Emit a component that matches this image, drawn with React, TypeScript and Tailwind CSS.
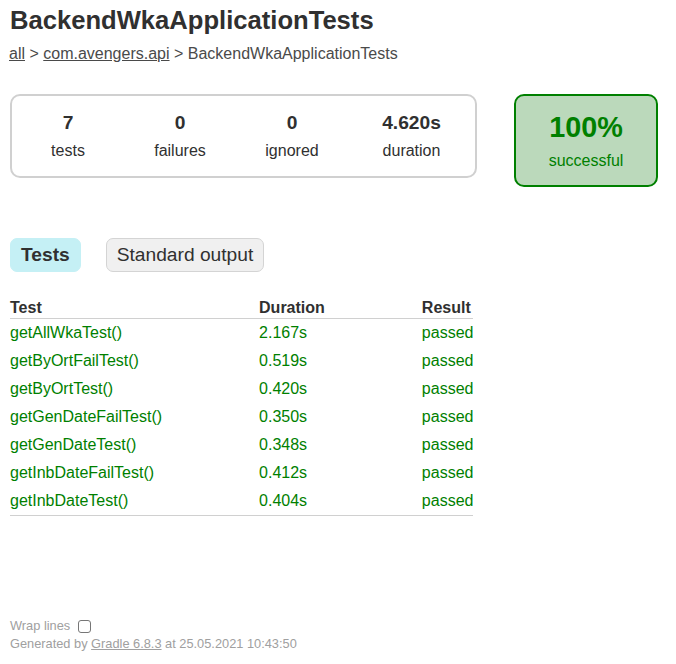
import React from "react";

const tests = [
  { name: "getAllWkaTest()", duration: "2.167s" },
  { name: "getByOrtFailTest()", duration: "0.519s" },
  { name: "getByOrtTest()", duration: "0.420s" },
  { name: "getGenDateFailTest()", duration: "0.350s" },
  { name: "getGenDateTest()", duration: "0.348s" },
  { name: "getInbDateFailTest()", duration: "0.412s" },
  { name: "getInbDateTest()", duration: "0.404s" },
];

function Counter({ value, label, wide }: { value: string; label: string; wide?: boolean }) {
  return (
    <div className={`${wide ? "w-[127px]" : "w-[112px]"} py-[16px] text-center`}>
      <p className="text-[19.2px] font-bold leading-[22px] mb-[8px]">{value}</p>
      <p className="leading-[18px]">{label}</p>
    </div>
  );
}

export default function App() {
  return (
    <div className="min-h-[664px] bg-white text-[#303030] text-[16px] font-['Liberation_Sans',Arial,sans-serif] px-[10px] pt-[6px]">
      <h1 className="text-[25.6px] font-bold leading-[29px] mb-[10px] whitespace-nowrap">BackendWkaApplicationTests</h1>
      <div className="leading-[18px] ml-[-1px] text-[#4a4a4a]">
        <a className="underline" href="#">all</a> &gt; <a className="underline" href="#">com.avengers.api</a> &gt; BackendWkaApplicationTests
      </div>

      {/* summary */}
      <div className="flex items-start mt-[31px]">
        <div className="flex border-2 border-[#d0d0d0] rounded-[10px]">
          <Counter value="7" label="tests" />
          <Counter value="0" label="failures" />
          <Counter value="0" label="ignored" />
          <Counter value="4.620s" label="duration" wide />
        </div>
        <div className="ml-[37px] w-[144px] border-2 border-[#008000] bg-[#bbd9bb] rounded-[10px] py-[15px] text-center text-[#008000]">
          <p className="text-[28.8px] font-bold leading-[33px] mb-[8px]">100%</p>
          <p className="leading-[18px]">successful</p>
        </div>
      </div>

      {/* tabs */}
      <div className="flex mt-[51px]">
        <div className="px-[10px] py-[5px] rounded-[7px] border border-[#c5f0f5] bg-[#c5f0f5] mr-[25px]">
          <span className="text-[19.2px] font-bold leading-[22px] block">Tests</span>
        </div>
        <div className="px-[10px] py-[5px] rounded-[7px] border border-[#d4d4d4] bg-[#f0f0f0]">
          <span className="text-[19.2px] leading-[22px] block">Standard output</span>
        </div>
      </div>

      {/* table */}
      <table className="mt-[27px] border-collapse border-b border-[#d0d0d0]">
        <thead>
          <tr className="border-b border-[#d0d0d0]">
            <th className="text-left font-bold leading-[18px] p-0 pb-[1px] whitespace-nowrap">Test</th>
            <th className="text-left font-bold leading-[18px] pl-[97px] pb-[1px] whitespace-nowrap">Duration</th>
            <th className="text-left font-bold leading-[18px] pl-[97px] pb-[1px] whitespace-nowrap">Result</th>
          </tr>
        </thead>
        <tbody className="text-[#008000]">
          {tests.map((t) => (
            <tr key={t.name}>
              <td className="py-[5px] leading-[18px] whitespace-nowrap">{t.name}</td>
              <td className="py-[5px] pl-[97px] leading-[18px] whitespace-nowrap">{t.duration}</td>
              <td className="py-[5px] pl-[97px] leading-[18px] whitespace-nowrap">passed</td>
            </tr>
          ))}
        </tbody>
      </table>

      {/* footer */}
      <div className="mt-[101px] text-[12.8px] text-[#a0a0a0] whitespace-nowrap leading-[18px]">
        <div className="flex items-center">
          <span>Wrap lines</span>
          <span className="ml-[8px] w-[13px] h-[13px] border border-[#767676] rounded-[3px] bg-white inline-block" />
        </div>
        <div>
          Generated by <a className="underline" href="#">Gradle 6.8.3</a> at 25.05.2021 10:43:50
        </div>
      </div>
    </div>
  );
}
